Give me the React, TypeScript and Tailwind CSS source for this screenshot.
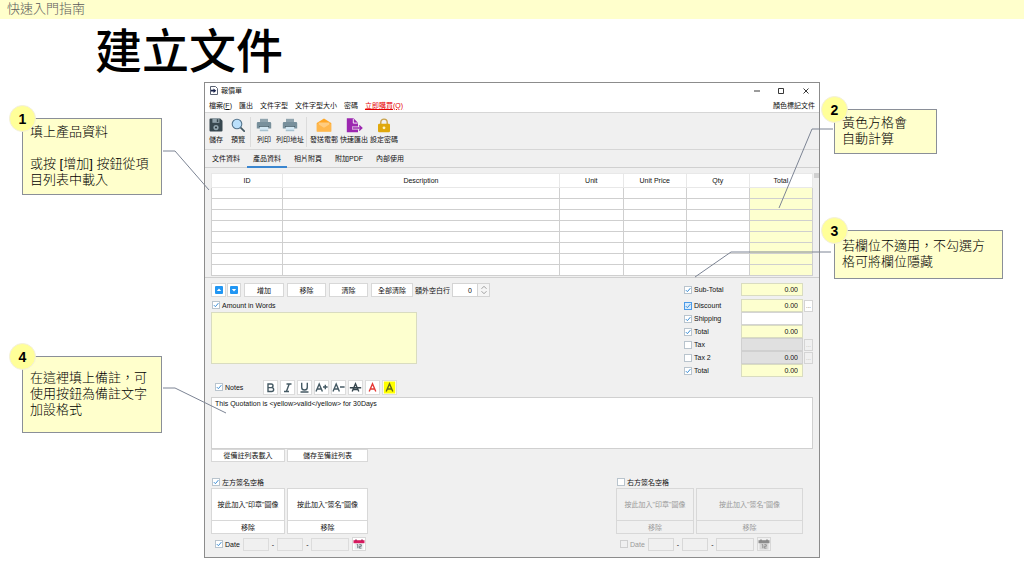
import React from "react";

const FIELD = "border border-[#d9dcc0] bg-[#fdffcf]";
const BTN =
  "flex items-center justify-center border border-[#d8d8d8] bg-white text-[7px] leading-none text-[#111] whitespace-nowrap disabled:bg-[#f0f0f0] disabled:text-[#9a9a9a]";

type CalloutProps = {
  n: number;
  className: string;
  points: string;
  children: React.ReactNode;
};

function Callout({ n, className, points, children }: CalloutProps) {
  return (
    <section className={`relative border border-[#8a8f98] bg-[#ffffcc] pl-[7px] ${className}`}>
      <svg className="pointer-events-none absolute top-0 left-0 z-10 h-px w-px overflow-visible" aria-hidden="true">
        <polyline points={points} fill="none" stroke="#7c8494" strokeWidth="1" />
      </svg>
      <span className="absolute -top-[14px] -left-[14px] flex size-[27px] items-center justify-center rounded-full border border-[#f3efdc] bg-[#ffff99] text-[14px] leading-none font-bold text-black">
        {n}
      </span>
      <p className="text-[13px] leading-[16px] font-light whitespace-nowrap text-black">{children}</p>
    </section>
  );
}

type CheckProps = {
  label: string;
  checked?: boolean;
  disabled?: boolean;
  focus?: boolean;
};

function Check({ label, checked = false, disabled = false, focus = false }: CheckProps) {
  return (
    <label
      className={`flex items-center gap-[2px] text-[7px] leading-none whitespace-nowrap ${disabled ? "text-[#9a9a9a]" : "text-[#111]"}`}
    >
      <span className="grid size-[8px] shrink-0">
        <input
          type="checkbox"
          defaultChecked={checked}
          disabled={disabled}
          className={`peer col-start-1 row-start-1 size-[8px] appearance-none border ${focus ? "border-[#4a9ae8] bg-[#d8ebfc]" : disabled ? "border-[#cfcfcf] bg-[#f0f0f0]" : "border-[#b9c4cd] bg-white"}`}
        />
        <svg
          viewBox="0 0 8 8"
          className="pointer-events-none invisible col-start-1 row-start-1 size-[8px] peer-checked:visible"
          aria-hidden="true"
        >
          <path d="M1.8 4.1 3.4 5.7 6.4 2.1" fill="none" stroke="#3d8fd6" strokeWidth="1" />
        </svg>
      </span>
      <span>{label}</span>
    </label>
  );
}

function SaveIcon() {
  return (
    <svg viewBox="0 0 14 14" className="size-[14px]" aria-hidden="true">
      <path d="M.5 1.5a1 1 0 0 1 1-1h9.800l2.200 2.200v9.800a1 1 0 0 1-1 1h-11a1 1 0 0 1-1-1z" fill="#37474f" />
      <path d="M3.400.5h7v4.300h-7z" fill="#8fa1aa" />
      <path d="M7.800 1.200h1.500v2.800H7.800z" fill="#37474f" />
      <circle cx="7" cy="9.600" r="2.600" fill="#90a4ae" />
      <circle cx="7" cy="9.600" r="1" fill="#263238" />
    </svg>
  );
}

function SearchIcon() {
  return (
    <svg viewBox="0 0 14 14" className="size-[14px]" aria-hidden="true">
      <path d="m9.400 9.400 3.800 3.800" stroke="#455a64" strokeWidth="1.700" strokeLinecap="round" />
      <circle cx="6" cy="6" r="4.800" fill="#bbe0fb" stroke="#54748c" strokeWidth="1.100" />
    </svg>
  );
}

function PrinterIcon() {
  return (
    <svg viewBox="0 0 16 14" className="h-[14px] w-[16px]" aria-hidden="true">
      <path d="M4 .8h8v4H4z" fill="#90a4ae" />
      <path d="M.8 5.200A1.200 1.200 0 0 1 2 4h12a1.200 1.200 0 0 1 1.200 1.200v5.300H.8z" fill="#78909c" />
      <path d="M3 8h10v.900H3z" fill="#455a64" />
      <path d="M3.800 8.800h8.400v4.400H3.800z" fill="#d3e8f4" />
      <path d="M3.800 11.800h8.400v1.400H3.800z" fill="#a9c3d0" />
    </svg>
  );
}

function MailIcon() {
  return (
    <svg viewBox="0 0 16 14" className="h-[14px] w-[16px]" aria-hidden="true">
      <path d="M.8 5 8 .4 15.200 5v8.500H.8z" fill="#ffa726" />
      <path d="M2.500 4.500h11v4L8 11.200 2.500 8.500z" fill="#ffcc80" />
      <path d="M.8 5.200 8 9.700l7.200-4.500v8.300H.8z" fill="#ffb74d" />
    </svg>
  );
}

function ExportIcon() {
  return (
    <svg viewBox="0 0 17 15" className="h-[15px] w-[17px]" aria-hidden="true">
      <path d="M.8.3h6.700L12 4.800v9.400H.8z" fill="#9c27b0" />
      <path d="M7.300.8v4.300h4.300" fill="none" stroke="#fff" strokeWidth=".9" />
      <path d="M6 10h10M13.400 7.300 16 10l-2.600 2.700" fill="none" stroke="#f0f0f0" strokeWidth="3" />
      <path d="M6.500 10h9.300M13.200 7.500 15.800 10l-2.600 2.500" fill="none" stroke="#9c27b0" strokeWidth="1.400" />
    </svg>
  );
}

function LockIcon() {
  return (
    <svg viewBox="0 0 14 15" className="h-[15px] w-[14px]" aria-hidden="true">
      <path d="M3.800 7V4.300a3.200 3.200 0 0 1 6.400 0V7" fill="none" stroke="#c9a24a" strokeWidth="1.400" />
      <rect x="1" y="5.800" width="12" height="8.500" rx="1.200" fill="#e0a80c" />
      <circle cx="7" cy="9.800" r="1.400" fill="#fff3c4" />
    </svg>
  );
}

function AppIcon() {
  return (
    <svg viewBox="0 0 8 9" className="h-[9px] w-[8px]" aria-hidden="true">
      <path d="M.5.5h5l2 2v6h-7z" fill="#fff" stroke="#5a6273" />
      <path d="M1 3.800h2.500V2.500l2.800 2.200-2.800 2.200V5.600H1z" fill="#16204a" />
    </svg>
  );
}

function CalendarIcon({ muted = false }: { muted?: boolean }) {
  return (
    <svg viewBox="0 0 12 11" className="h-[11px] w-[12px]" aria-hidden="true">
      <path d="M1.500 4h9v6.500h-9z" fill={muted ? "#d6d6d6" : "#eceff1"} />
      <path d="M.5 1.200h11v3H.5z" fill={muted ? "#8c8c8c" : "#d81b60"} />
      <path d="M3 .3v1.800M9 .3v1.800" stroke={muted ? "#777" : "#8e1144"} />
      <path
        d="M3.800 5.600h1v3.600M6.300 5.700h2v1.600h-2v1.800h2.200"
        fill="none"
        stroke={muted ? "#8a8a8a" : "#5b6a72"}
        strokeWidth=".9"
      />
    </svg>
  );
}

function ArrowTile({ down = false }: { down?: boolean }) {
  return (
    <svg viewBox="0 0 8 8" className="size-[8px]" aria-hidden="true">
      <rect width="8" height="8" rx="1" fill="#2196f3" />
      <path d={down ? "M1.800 3h4.400L4 5.600z" : "M1.800 5h4.400L4 2.400z"} fill="#fff" />
    </svg>
  );
}

function Tool({ label, width, children }: { label: string; width: string; children: React.ReactNode }) {
  return (
    <button
      type="button"
      className={`flex shrink-0 flex-col items-center text-[7px] leading-none whitespace-nowrap text-[#111] ${width}`}
    >
      <span className="flex h-[16px] items-center justify-center">{children}</span>
      <span className="mt-[3px] leading-[8px]">{label}</span>
    </button>
  );
}

type TotalRow = {
  label: string;
  checked: boolean;
  value: string;
  tone: "yellow" | "white" | "gray";
  more?: boolean;
};

const TOTALS: TotalRow[] = [
  { label: "Sub-Total", checked: true, value: "0.00", tone: "yellow" },
  { label: "Discount", checked: true, value: "0.00", tone: "yellow", more: true },
  { label: "Shipping", checked: true, value: "", tone: "white" },
  { label: "Total", checked: true, value: "0.00", tone: "yellow" },
  { label: "Tax", checked: false, value: "", tone: "gray", more: true },
  { label: "Tax 2", checked: false, value: "0.00", tone: "gray", more: true },
  { label: "Total", checked: true, value: "0.00", tone: "yellow" },
];

const TONES = {
  yellow: FIELD,
  white: "border border-[#d4d4d4] bg-white",
  gray: "border border-[#d0d0d0] bg-[#e0e0e0]",
};

function Totals() {
  return (
    <div className="flex w-[129px] shrink-0 flex-col">
      {TOTALS.map((row, i) => (
        <div key={i} className={`flex h-[13px] items-center ${i === 0 ? "mb-[3px]" : ""}`}>
          <div className="w-[57px] shrink-0">
            <Check label={row.label} checked={row.checked} focus={row.label === "Discount"} />
          </div>
          <input
            type="text"
            aria-label={row.label}
            defaultValue={row.value}
            disabled={row.tone === "gray"}
            className={`h-[13px] w-[62px] shrink-0 pr-[4px] text-right text-[7px] leading-none text-[#111] ${TONES[row.tone]}`}
          />
          {row.more && (
            <button
              type="button"
              disabled={row.tone === "gray"}
              className="ml-px flex h-[12px] w-[9px] shrink-0 items-center justify-center border border-[#d4d4d4] bg-white text-[6px] leading-none text-[#333] disabled:bg-[#f0f0f0] disabled:text-[#aaa]"
            >
              ...
            </button>
          )}
        </div>
      ))}
    </div>
  );
}

const FORMATS = [
  { name: "Bold", color: "#455a64", d: "M4 3h3.200a1.700 1.700 0 0 1 0 3.600H4zM4 6.600h3.700a1.900 1.900 0 0 1 0 3.900H4z" },
  { name: "Italic", color: "#455a64", d: "M5.500 3h5M3 10.500h5M8.200 3 5.400 10.500" },
  { name: "Underline", color: "#455a64", d: "M3.700 1.800v4.400a2.800 2.800 0 0 0 5.600 0V1.800M2.500 11h8" },
  { name: "Larger", color: "#455a64", d: "M1 10.500 4.200 3l3.200 7.500M2.200 8h4M8 6h4.600M10.300 3.700v4.600" },
  { name: "Smaller", color: "#455a64", d: "M1 10.500 4.200 3l3.200 7.500M2.200 8h4M8 6h4.600" },
  { name: "Strike", color: "#37474f", d: "M3.200 10.500 6.500 2.800l3.300 7.700M4.400 8.500h4.200M.8 6.800h11.400" },
  { name: "Red", color: "#e53935", d: "M3.200 10.500 6.500 2.800l3.300 7.700M4.400 8h4.200" },
  { name: "Highlight", color: "#606a1c", d: "M3.200 10.500 6.500 2.800l3.300 7.700M4.400 8h4.200" },
];

type SignatureProps = {
  title: string;
  enabled: boolean;
  firstWidth: string;
  secondWidth: string;
};

function Signature({ title, enabled, firstWidth, secondWidth }: SignatureProps) {
  const off = !enabled;
  const box = `h-[13px] border bg-[#f0f0f0] ${off ? "border-[#d8d8d8]" : "border-[#dcdcdc]"}`;
  return (
    <fieldset className="flex flex-col">
      <div className="flex h-[10px] items-center pl-px">
        <Check label={title} checked={enabled} />
      </div>
      <div className="mt-px flex gap-[2px]">
        {[
          { text: '按此加入"印章"圖像', w: firstWidth },
          { text: '按此加入"簽名"圖像', w: secondWidth },
        ].map((b) => (
          <div key={b.text} className={`flex flex-col ${b.w}`}>
            <button type="button" disabled={off} className={`${BTN} h-[33px] w-full`}>
              {b.text}
            </button>
            <button type="button" disabled={off} className={`${BTN} h-[13px] w-full border-t-0`}>
              移除
            </button>
          </div>
        ))}
      </div>
      <div className="mt-[3px] flex h-[14px] items-center gap-[3px] pl-[4px] text-[7px] leading-none">
        <Check label="Date" checked={enabled} disabled={off} />
        <input type="text" aria-label="Day" disabled={off} className={`${box} w-[26px]`} />
        <span>-</span>
        <input type="text" aria-label="Month" disabled={off} className={`${box} w-[26px]`} />
        <span>-</span>
        <input type="text" aria-label="Year" disabled={off} className={`${box} w-[38px]`} />
        <button type="button" aria-label="Calendar" disabled={off} className={`${BTN} size-[14px]`}>
          <CalendarIcon muted={off} />
        </button>
      </div>
    </fieldset>
  );
}

const MENUS = ["匯出", "文件字型", "文件字型大小", "密碼"];
const TABS = ["文件資料", "產品資料", "相片附頁", "附加PDF", "內部使用"];
const COLUMNS = ["ID", "Description", "Unit", "Unit Price", "Qty", "Total"];

function QuotationWindow() {
  return (
    <div className="min-w-0 flex-1 border border-[#8c8c8c] bg-[#f0f0f0] text-[7px] leading-none text-[#111]">
      <header className="bg-white">
        <div className="flex h-[15px] items-center pl-[5px]">
          <AppIcon />
          <span className="ml-[3px]">報價單</span>
          <svg viewBox="0 0 56 8" className="mr-[9px] ml-auto h-[8px] w-[56px]" aria-hidden="true">
            <path d="M0 4h6M24.500 1.500h5v5h-5zM49.500 1.500l5 5M54.500 1.500l-5 5" fill="none" stroke="#222" strokeWidth=".9" />
          </svg>
        </div>
        <nav className="flex h-[14px] items-center gap-[7px] px-[4px] whitespace-nowrap">
          <button type="button">
            檔案(<u>F</u>)
          </button>
          {MENUS.map((m) => (
            <button key={m} type="button">
              {m}
            </button>
          ))}
          <button type="button" className="text-[#e60000] underline">
            立即購買(Q)
          </button>
          <button type="button" className="ml-auto">
            顏色標記文件
          </button>
        </nav>
      </header>

      <div className="flex h-[38px] items-start border-y border-[#d6d6d6] pt-[4px]">
        <Tool label="儲存" width="w-[22px]">
          <SaveIcon />
        </Tool>
        <Tool label="預覽" width="w-[22px]">
          <SearchIcon />
        </Tool>
        <span className="mx-px h-[30px] w-px bg-[#dcdcdc]" />
        <Tool label="列印" width="w-[24px]">
          <PrinterIcon />
        </Tool>
        <Tool label="列印地址" width="w-[28px]">
          <PrinterIcon />
        </Tool>
        <span className="mx-[2px] h-[30px] w-px bg-[#dcdcdc]" />
        <Tool label="發送電郵" width="w-[30px]">
          <MailIcon />
        </Tool>
        <Tool label="快速匯出" width="w-[30px]">
          <ExportIcon />
        </Tool>
        <Tool label="設定密碼" width="w-[30px]">
          <LockIcon />
        </Tool>
      </div>

      <div role="tablist" className="flex h-[18px] gap-px border-b border-[#d0d0d0] pl-px">
        {TABS.map((t, i) => (
          <button
            key={t}
            type="button"
            role="tab"
            aria-selected={i === 1}
            className={`h-[18px] border-b-2 px-[6px] whitespace-nowrap ${i === 1 ? "border-[#3a86d0]" : "border-transparent"}`}
          >
            {t}
          </button>
        ))}
      </div>

      <div className="flex pt-[5px] pl-[6px]">
        <table className="w-full table-fixed border-collapse bg-white">
          <colgroup>
            <col className="w-[11.8%]" />
            <col className="w-[46.100%]" />
            <col className="w-[10.600%]" />
            <col className="w-[10.500%]" />
            <col className="w-[10.500%]" />
            <col className="w-[10.500%]" />
          </colgroup>
          <thead>
            <tr className="h-[14px]">
              {COLUMNS.map((c) => (
                <th key={c} scope="col" className="border border-[#e8e8e8] p-0 text-center font-normal">
                  {c}
                </th>
              ))}
            </tr>
          </thead>
          <tbody>
            {Array.from({ length: 8 }, (_, r) => (
              <tr key={r} className="h-[11px]">
                {COLUMNS.map((c) => (
                  <td
                    key={c}
                    className={`border border-[#cfcfcf] p-0 ${c === "Total" ? "bg-[#fdffcf]" : ""}`}
                  />
                ))}
              </tr>
            ))}
          </tbody>
        </table>
        <div className="w-[6px] shrink-0">
          <div className="ml-px h-[5px] w-[5px] bg-[#d0d0d0]" />
        </div>
      </div>

      <div className="mt-px border-t border-[#cfcfcf] px-[6px] pt-[5px] pb-[6px]">
        <div className="flex justify-between">
          <div>
            <div className="flex h-[14px] items-center gap-[3px]">
              <div className="flex gap-px">
                <button type="button" aria-label="Move up" className={`${BTN} h-[14px] w-[15px]`}>
                  <ArrowTile />
                </button>
                <button type="button" aria-label="Move down" className={`${BTN} h-[14px] w-[14px]`}>
                  <ArrowTile down />
                </button>
              </div>
              <button type="button" className={`${BTN} h-[14px] w-[40px]`}>
                增加
              </button>
              <button type="button" className={`${BTN} h-[14px] w-[39px]`}>
                移除
              </button>
              <button type="button" className={`${BTN} h-[14px] w-[39px]`}>
                清除
              </button>
              <button type="button" className={`${BTN} h-[14px] w-[42px]`}>
                全部清除
              </button>
              <label htmlFor="blank-rows" className="-mr-px -ml-px whitespace-nowrap">
                額外空白行
              </label>
              <div className="flex h-[14px] border border-[#d4d4d4] bg-white">
                <input
                  id="blank-rows"
                  type="text"
                  defaultValue="0"
                  className="w-[25px] border-r border-[#d4d4d4] pr-[5px] text-right"
                />
                <button type="button" aria-label="Step" className="flex w-[11px] items-center justify-center bg-[#f5f5f5]">
                  <svg viewBox="0 0 8 10" className="h-[10px] w-[8px]" aria-hidden="true">
                    <path d="M1.500 3.800 4 1.300l2.500 2.500M1.500 6.200 4 8.700l2.500-2.500" fill="none" stroke="#888" strokeWidth=".8" />
                  </svg>
                </button>
              </div>
            </div>
            <div className="mt-[3px] flex h-[10px] items-center pl-px">
              <Check label="Amount in Words" checked />
            </div>
            <textarea aria-label="Amount in Words" className={`mt-[2px] block h-[52px] w-[206px] resize-none ${FIELD}`} />
            <div className="mt-[16px] flex h-[14px] items-center">
              <div className="w-[52px] pl-[4px]">
                <Check label="Notes" checked />
              </div>
              <div className="flex gap-[2px]">
                {FORMATS.map((f) => (
                  <button
                    key={f.name}
                    type="button"
                    aria-label={f.name}
                    className="flex size-[15px] items-center justify-center border border-[#dcdcdc] bg-white"
                  >
                    <svg viewBox="0 0 13 13" className="size-[13px]" aria-hidden="true">
                      {f.name === "Highlight" && <path d="M.8.5h11.400v12H.8z" fill="#ff0" />}
                      <path d={f.d} fill="none" stroke={f.color} strokeWidth="1.400" />
                    </svg>
                  </button>
                ))}
              </div>
            </div>
          </div>
          <Totals />
        </div>

        <textarea
          aria-label="Notes"
          defaultValue="This Quotation is <yellow>valid</yellow> for 30Days"
          className="mt-[3px] block h-[52px] w-full resize-none border border-[#d0d0d0] bg-white px-[3px] pt-[2px] text-[7px] leading-[8px]"
        />
        <div className="flex gap-[2px]">
          <button type="button" className={`${BTN} h-[13px] w-[74px]`}>
            從備註列表載入
          </button>
          <button type="button" className={`${BTN} h-[13px] w-[81px]`}>
            儲存至備註列表
          </button>
        </div>

        <div className="mt-[15px] flex justify-between pr-[10px]">
          <Signature title="左方簽名空格" enabled firstWidth="w-[74px]" secondWidth="w-[81px]" />
          <Signature title="右方簽名空格" enabled={false} firstWidth="w-[78px]" secondWidth="w-[107px]" />
        </div>
      </div>
    </div>
  );
}

export default function App() {
  return (
    <div
      lang="zh-Hant"
      className="min-h-screen bg-white pb-[18px] font-['Liberation_Sans','Noto_Sans_CJK_TC',sans-serif]"
    >
      <div className="flex h-[19px] items-center bg-[#ffffcc] pb-[2px] pl-[7px] text-[13px] leading-none font-light text-[#5a5a5a]">
        快速入門指南
      </div>
      <h1 className="pt-[2px] pl-[95px] text-[47px] leading-[61px] font-medium text-black">建立文件</h1>
      <main className="flex items-start">
        <aside className="w-[204px] shrink-0 pt-[36px] pl-[22px]">
          <Callout n={1} className="h-[77px] w-[140px] pt-[5px]" points="140,32 152,32 186,71">
            填上產品資料
            <br />
            <br />
            或按 [增加] 按鈕從項
            <br />
            目列表中載入
          </Callout>
          <Callout n={4} className="mt-[161px] h-[77px] w-[140px] pt-[13px]" points="140,31 152,31 203,56">
            在這裡填上備註，可
            <br />
            使用按鈕為備註文字
            <br />
            加設格式
          </Callout>
        </aside>
        <QuotationWindow />
        <aside className="w-[204px] shrink-0 pt-[27px] pl-[14px]">
          <Callout n={2} className="h-[45px] w-[103px] pt-[5px]" points="-2,19 -23,19 -56,98">
            黃色方格會
            <br />
            自動計算
          </Callout>
          <Callout n={3} className="mt-[76px] h-[49px] w-[169px] pt-[7px]" points="-4,21 -104,21 -140,46">
            若欄位不適用，不勾選方
            <br />
            格可將欄位隱藏
          </Callout>
        </aside>
      </main>
    </div>
  );
}
